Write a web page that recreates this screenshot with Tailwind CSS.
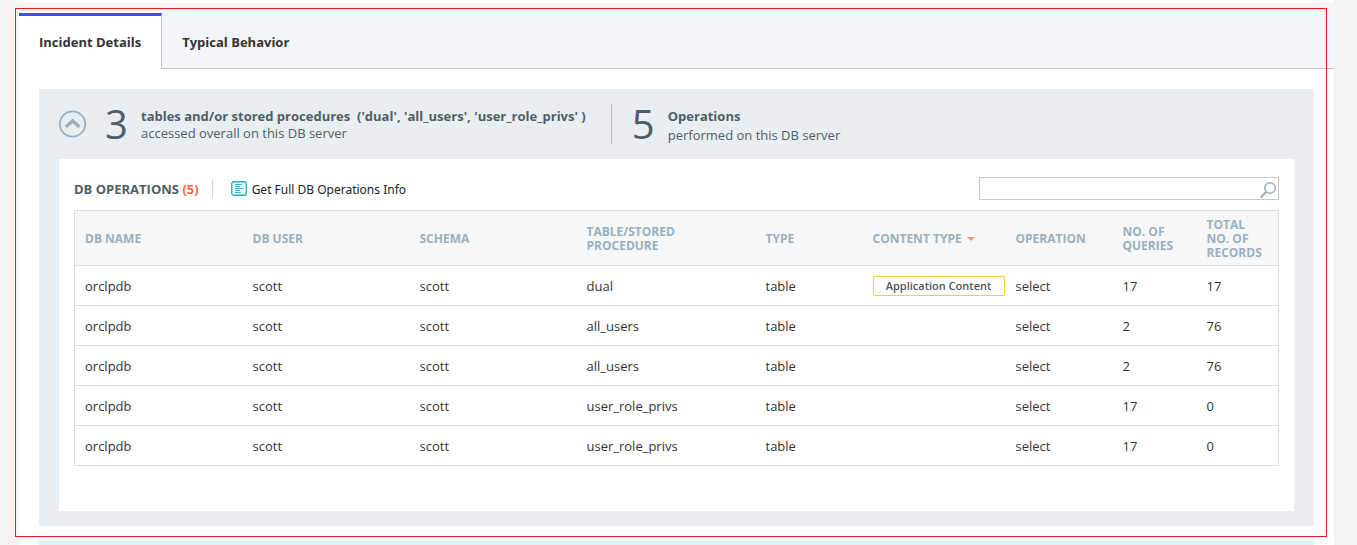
<!DOCTYPE html>
<html lang="en">
<head>
    <meta charset="UTF-8">
    <meta name="viewport" content="width=device-width, initial-scale=1.0">
    <title>Incident Details</title>
    <script src="https://cdn.jsdelivr.net/npm/@tailwindcss/browser@4"></script>
</head>
<body class="bg-[#f4f4f4] font-['Open_Sans',sans-serif] text-[13px] leading-[18px] text-[#333]">
    <div class="relative h-dvh overflow-hidden pl-[19px] pr-[23px]">

        <!-- end of the previous section -->
        <div class="h-[3px] bg-white"></div>

        <main class="mt-[10px] bg-white">

            <!-- tabs -->
            <div role="tablist" class="flex h-14 bg-[#f3f6f9]">
                <button role="tab" aria-selected="true" class="border-t-3 border-r border-t-[#2a5be8] border-r-[#c8c8c8] bg-white px-5 pb-[2px] font-bold">Incident Details</button>
                <button role="tab" aria-selected="false" class="border-b border-[#c8c8c8] px-5 pt-[3px] font-bold">Typical Behavior</button>
                <div class="grow border-b border-[#c8c8c8]"></div>
            </div>

            <!-- tables and operations panel -->
            <section class="mx-5 mt-5 bg-[#e9eef2] px-5 pb-[15px]">
                <header class="flex h-[70px] items-center text-[#4f5f66]">
                    <button aria-label="Collapse" class="mr-[18px] shrink-0">
                        <svg class="size-7" viewBox="0 0 28 28" fill="none" stroke="#9bb0bd">
                            <circle cx="13.5" cy="14" r="12.7" stroke-width="1.8"/>
                            <path d="M6.9 17 13.6 10.8l6.8 6.2" stroke-width="3.4"/>
                        </svg>
                    </button>
                    <span class="w-9 text-[40px] leading-10">3</span>
                    <p class="pt-[2px] leading-[17px]">
                        <strong>tables and/or stored procedures&nbsp; ('dual', 'all_users', 'user_role_privs' )</strong><br>
                        accessed overall on this DB server
                    </p>
                    <div class="mr-5 ml-[25px] h-10 w-px bg-[#b5babd]"></div>
                    <span class="w-9 text-[40px] leading-10">5</span>
                    <p class="pt-[3px] leading-[19px]">
                        <strong>Operations</strong><br>
                        performed on this DB server
                    </p>
                </header>

                <div class="bg-white px-[15px] pt-[18px] pb-[45px]">

                    <!-- toolbar -->
                    <div class="mb-[10px] flex items-center">
                        <h2 class="font-bold text-[#4f5f66]">DB OPERATIONS <span class="text-[#f26b32]">(5)</span></h2>
                        <div class="mx-[13px] h-[18px] w-px bg-[#cdd5da]"></div>
                        <a href="#" class="ml-[5px] flex items-center gap-[5px] font-['Noto_Sans',sans-serif] text-xs text-[#222]">
                            <svg class="h-[15px] w-4" viewBox="0 0 16 15" fill="none" stroke="#25aac4">
                                <rect x=".75" y=".75" width="14.5" height="13.5" rx="2" stroke-width="1.3" fill="#eefafc"/>
                                <path d="M4 3.5h7M4 5.5h5M4 7.5h8M4 9.5h5M4 11.5h6" stroke-width=".9"/>
                            </svg>
                            <span class="pt-[2px]">Get Full DB Operations Info</span>
                        </a>
                        <div class="relative ml-auto w-[300px]">
                            <input type="text" aria-label="Search operations" class="block h-[23px] w-full border border-[#c8c8c8] bg-white pr-6 pl-2">
                            <svg class="absolute top-1 right-[2px] size-[18px]" viewBox="0 0 18 18" fill="none" stroke="#9bb0bd">
                                <circle cx="11" cy="7" r="5.3" stroke-width="1.5"/>
                                <path d="M7.2 10.8 1.5 16.5" stroke-width="2"/>
                            </svg>
                        </div>
                    </div>

                    <!-- operations table -->
                    <table class="w-full table-fixed border-collapse border border-[#dcdfe1] text-left">
                        <colgroup>
                            <col class="w-[168px]">
                            <col class="w-[167px]">
                            <col class="w-[167px]">
                            <col class="w-[179px]">
                            <col class="w-[107px]">
                            <col class="w-[143px]">
                            <col class="w-[107px]">
                            <col class="w-[84px]">
                            <col class="w-[82px]">
                        </colgroup>
                        <thead class="bg-[#f5f7f9] text-xs leading-[14px] text-[#9bb0bd]">
                            <tr class="h-[55px] *:px-[10px] *:pt-[2px] *:font-bold">
                                <th>DB NAME</th>
                                <th>DB USER</th>
                                <th>SCHEMA</th>
                                <th>TABLE/STORED<br>PROCEDURE</th>
                                <th>TYPE</th>
                                <th>
                                    <span class="flex items-center gap-[5px]">
                                        CONTENT TYPE
                                        <svg class="h-1 w-2" viewBox="0 0 8 4" fill="#f59b71"><path d="M0 0h8L4 4z"/></svg>
                                    </span>
                                </th>
                                <th>OPERATION</th>
                                <th>NO. OF<br>QUERIES</th>
                                <th>TOTAL<br>NO. OF<br>RECORDS</th>
                            </tr>
                        </thead>
                        <tbody class="*:h-10 *:border-t *:border-[#dcdfe1] *:*:px-[10px]">
                            <tr>
                                <td>orclpdb</td>
                                <td>scott</td>
                                <td>scott</td>
                                <td>dual</td>
                                <td>table</td>
                                <td><span class="block h-5 w-[132px] rounded-xs border border-[#fbcb3c] text-center text-[11px] font-semibold text-[#555]">Application Content</span></td>
                                <td>select</td>
                                <td>17</td>
                                <td>17</td>
                            </tr>
                            <tr>
                                <td>orclpdb</td>
                                <td>scott</td>
                                <td>scott</td>
                                <td>all_users</td>
                                <td>table</td>
                                <td></td>
                                <td>select</td>
                                <td>2</td>
                                <td>76</td>
                            </tr>
                            <tr>
                                <td>orclpdb</td>
                                <td>scott</td>
                                <td>scott</td>
                                <td>all_users</td>
                                <td>table</td>
                                <td></td>
                                <td>select</td>
                                <td>2</td>
                                <td>76</td>
                            </tr>
                            <tr>
                                <td>orclpdb</td>
                                <td>scott</td>
                                <td>scott</td>
                                <td>user_role_privs</td>
                                <td>table</td>
                                <td></td>
                                <td>select</td>
                                <td>17</td>
                                <td>0</td>
                            </tr>
                            <tr>
                                <td>orclpdb</td>
                                <td>scott</td>
                                <td>scott</td>
                                <td>user_role_privs</td>
                                <td>table</td>
                                <td></td>
                                <td>select</td>
                                <td>17</td>
                                <td>0</td>
                            </tr>
                        </tbody>
                    </table>
                </div>
            </section>

            <!-- top of the next panel -->
            <section class="mx-5 mt-[15px] h-20 bg-[#e9eef2]"></section>
        </main>

        <!-- red highlight frame -->
        <div class="pointer-events-none absolute top-2 right-[30px] bottom-2 left-[15px] border border-[#e81c24]"></div>
    </div>
</body>
</html>
